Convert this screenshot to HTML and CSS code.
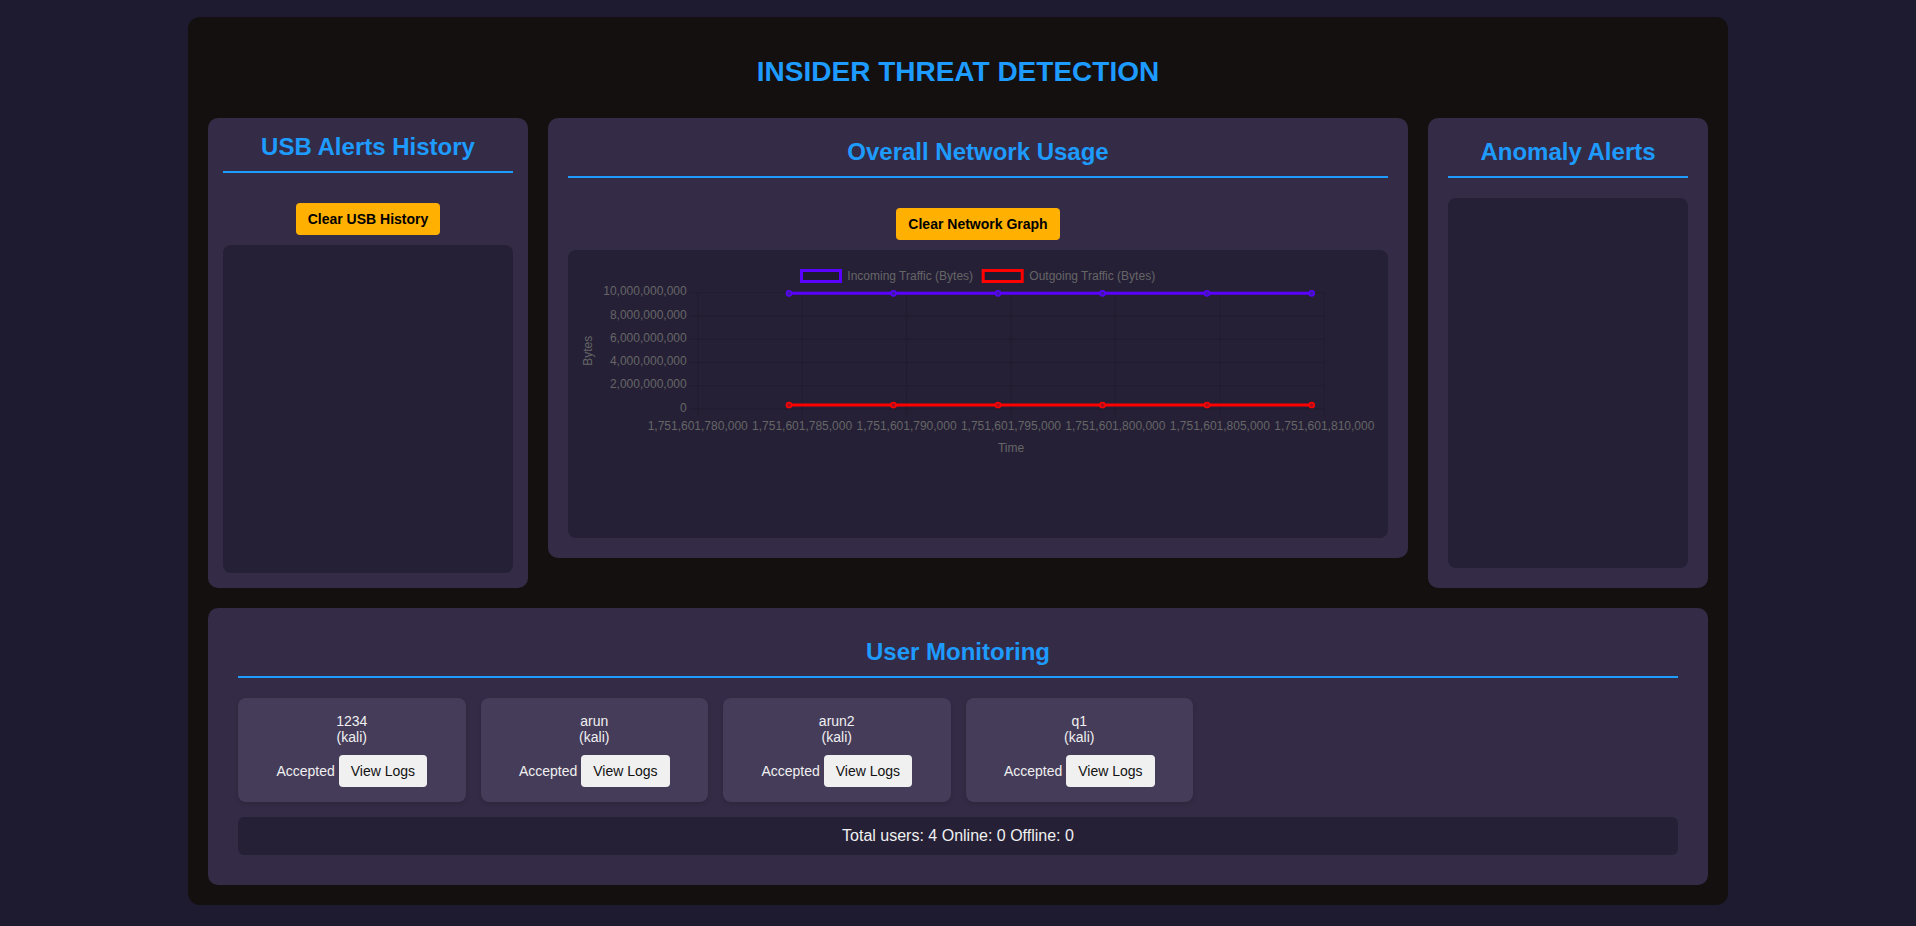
FILE: index.html
```html
<!DOCTYPE html>
<html lang="en">
<head>
<meta charset="utf-8">
<title>Insider Threat Detection</title>
<link rel="stylesheet" href="styles.css">
</head>
<body>
<div class="container">
  <h1 class="main-title">INSIDER THREAT DETECTION</h1>
  <div class="panels">
    <section class="panel panel-usb">
      <h2 class="panel-title">USB Alerts History</h2>
      <div class="btn-wrap"><button class="btn-amber">Clear USB History</button></div>
      <div class="inner-box usb-box"></div>
    </section>
    <section class="panel">
      <h2 class="panel-title">Overall Network Usage</h2>
      <div class="btn-wrap"><button class="btn-amber">Clear Network Graph</button></div>
      <div class="inner-box chart-box">
        <svg class="chart" width="820" height="288" viewBox="0 0 820 288" xmlns="http://www.w3.org/2000/svg">
          <g class="grid" stroke="rgba(0,0,0,0.12)" stroke-width="1">
            <line x1="121.7" y1="42.7" x2="756.3" y2="42.7"/>
            <line x1="121.7" y1="66" x2="756.3" y2="66"/>
            <line x1="121.7" y1="89.2" x2="756.3" y2="89.2"/>
            <line x1="121.7" y1="112.5" x2="756.3" y2="112.5"/>
            <line x1="121.7" y1="135.7" x2="756.3" y2="135.7"/>
            <line x1="121.7" y1="159" x2="756.3" y2="159"/>
            <line x1="129.7" y1="42.7" x2="129.7" y2="167"/>
            <line x1="234.1" y1="42.7" x2="234.1" y2="167"/>
            <line x1="338.6" y1="42.7" x2="338.6" y2="167"/>
            <line x1="443" y1="42.7" x2="443" y2="167"/>
            <line x1="547.4" y1="42.7" x2="547.4" y2="167"/>
            <line x1="651.9" y1="42.7" x2="651.9" y2="167"/>
            <line x1="756.3" y1="42.7" x2="756.3" y2="167"/>
          </g>
          <g class="legend">
            <rect x="233.5" y="20.5" width="39" height="11" fill="#1f1a30" stroke="#5a00ff" stroke-width="3"/>
            <text x="279.3" y="29.5">Incoming Traffic (Bytes)</text>
            <rect x="415.2" y="20.5" width="39" height="11" fill="#1f1a30" stroke="#ff0000" stroke-width="3"/>
            <text x="461.3" y="29.5">Outgoing Traffic (Bytes)</text>
          </g>
          <g class="ylabels" text-anchor="end">
            <text x="118.7" y="45.3">10,000,000,000</text>
            <text x="118.7" y="68.6">8,000,000,000</text>
            <text x="118.7" y="91.8">6,000,000,000</text>
            <text x="118.7" y="115.1">4,000,000,000</text>
            <text x="118.7" y="138.3">2,000,000,000</text>
            <text x="118.7" y="161.6">0</text>
          </g>
          <g class="xlabels" text-anchor="middle">
            <text x="129.7" y="180.3">1,751,601,780,000</text>
            <text x="234.1" y="180.3">1,751,601,785,000</text>
            <text x="338.6" y="180.3">1,751,601,790,000</text>
            <text x="443" y="180.3">1,751,601,795,000</text>
            <text x="547.4" y="180.3">1,751,601,800,000</text>
            <text x="651.9" y="180.3">1,751,601,805,000</text>
            <text x="756.3" y="180.3">1,751,601,810,000</text>
          </g>
          <text class="axis-title" x="443" y="201.7" text-anchor="middle">Time</text>
          <text class="axis-title" transform="translate(24 100.8) rotate(-90)" text-anchor="middle">Bytes</text>
          <polyline points="221,43.3 743.7,43.3" fill="none" stroke="#5a00ff" stroke-width="3"/>
          <polyline points="221,155 743.7,155" fill="none" stroke="#ff0000" stroke-width="3"/>
          <g fill="#3d1ca0" stroke="#5a00ff" stroke-width="1.5">
            <circle cx="221" cy="43.3" r="2.6"/>
            <circle cx="325.5" cy="43.3" r="2.6"/>
            <circle cx="430" cy="43.3" r="2.6"/>
            <circle cx="534.5" cy="43.3" r="2.6"/>
            <circle cx="639" cy="43.3" r="2.6"/>
            <circle cx="743.7" cy="43.3" r="2.6"/>
          </g>
          <g fill="#a01020" stroke="#ff0000" stroke-width="1.5">
            <circle cx="221" cy="155" r="2.6"/>
            <circle cx="325.5" cy="155" r="2.6"/>
            <circle cx="430" cy="155" r="2.6"/>
            <circle cx="534.5" cy="155" r="2.6"/>
            <circle cx="639" cy="155" r="2.6"/>
            <circle cx="743.7" cy="155" r="2.6"/>
          </g>
        </svg>
      </div>
    </section>
    <section class="panel">
      <h2 class="panel-title">Anomaly Alerts</h2>
      <div class="inner-box anomaly-box"></div>
    </section>
  </div>
  <section class="panel panel-users">
    <h2 class="panel-title">User Monitoring</h2>
    <div class="user-grid">
      <div class="user-card">
        <div class="user-name">1234<br>(kali)</div>
        <div class="user-row">Accepted <button class="btn-logs">View Logs</button></div>
      </div>
      <div class="user-card">
        <div class="user-name">arun<br>(kali)</div>
        <div class="user-row">Accepted <button class="btn-logs">View Logs</button></div>
      </div>
      <div class="user-card">
        <div class="user-name">arun2<br>(kali)</div>
        <div class="user-row">Accepted <button class="btn-logs">View Logs</button></div>
      </div>
      <div class="user-card">
        <div class="user-name">q1<br>(kali)</div>
        <div class="user-row">Accepted <button class="btn-logs">View Logs</button></div>
      </div>
    </div>
    <div class="user-summary">Total users: 4 Online: 0 Offline: 0</div>
  </section>
</div>
</body>
</html>
```

FILE: styles.css
```css
html, body {
  margin: 0;
  padding: 0;
}
body {
  background: #1e1a2f;
  font-family: "Liberation Sans", Arial, sans-serif;
  color: #eeeeee;
  padding: 17px 0 21px;
}
.container {
  width: 1540px;
  box-sizing: border-box;
  margin: 0 auto;
  padding: 20px;
  background: #141010;
  border-radius: 12px;
}
.main-title {
  margin: 0.67em 0 30px;
  font-size: 28px;
  font-weight: bold;
  text-align: center;
  color: #1e9bff;
}
.panels {
  display: grid;
  grid-template-columns: 320px 1fr 280px;
  gap: 20px;
  align-items: start;
  margin-bottom: 20px;
}
.panel {
  background: #342c46;
  border-radius: 10px;
  padding: 20px;
}
.panel-usb {
  padding: 15px;
}
.panel-title {
  margin: 0 0 20px;
  padding-bottom: 10px;
  border-bottom: 2px solid #1e9bff;
  font-size: 24px;
  font-weight: bold;
  text-align: center;
  color: #1e9bff;
}
.btn-wrap {
  text-align: center;
  margin: 30px 0 10px;
  line-height: 0;
}
.btn-amber {
  font-family: "Liberation Sans", Arial, sans-serif;
  font-size: 14px;
  line-height: 16px;
  font-weight: bold;
  color: #000;
  background: #ffb000;
  border: none;
  border-radius: 4px;
  padding: 8px 12px;
}
.inner-box {
  background: #252036;
  border-radius: 8px;
}
.usb-box {
  height: 328px;
}
.anomaly-box {
  height: 370px;
}
.chart-box {
  height: 288px;
  overflow: hidden;
}
.chart {
  display: block;
}
.chart text {
  font-family: "Liberation Sans", Arial, sans-serif;
  font-size: 12px;
  fill: #666666;
}
.panel-users {
  padding: 30px;
}
.user-grid {
  display: grid;
  grid-template-columns: repeat(6, 1fr);
  gap: 15px;
}
.user-card {
  background: #453c5a;
  border-radius: 8px;
  padding: 15px;
  text-align: center;
  font-size: 14px;
  color: #f0f0f0;
  box-shadow: 0 2px 4px rgba(0, 0, 0, 0.15);
}
.user-row {
  margin-top: 10px;
}
.btn-logs {
  font-family: "Liberation Sans", Arial, sans-serif;
  font-size: 14px;
  line-height: 16px;
  color: #111;
  background: #f0f0f0;
  border: none;
  border-radius: 4px;
  padding: 8px 12px;
}
.user-summary {
  margin-top: 15px;
  padding: 10px;
  background: #252036;
  border-radius: 6px;
  text-align: center;
  font-size: 16px;
  line-height: 18px;
  color: #f0f0f0;
}
```
